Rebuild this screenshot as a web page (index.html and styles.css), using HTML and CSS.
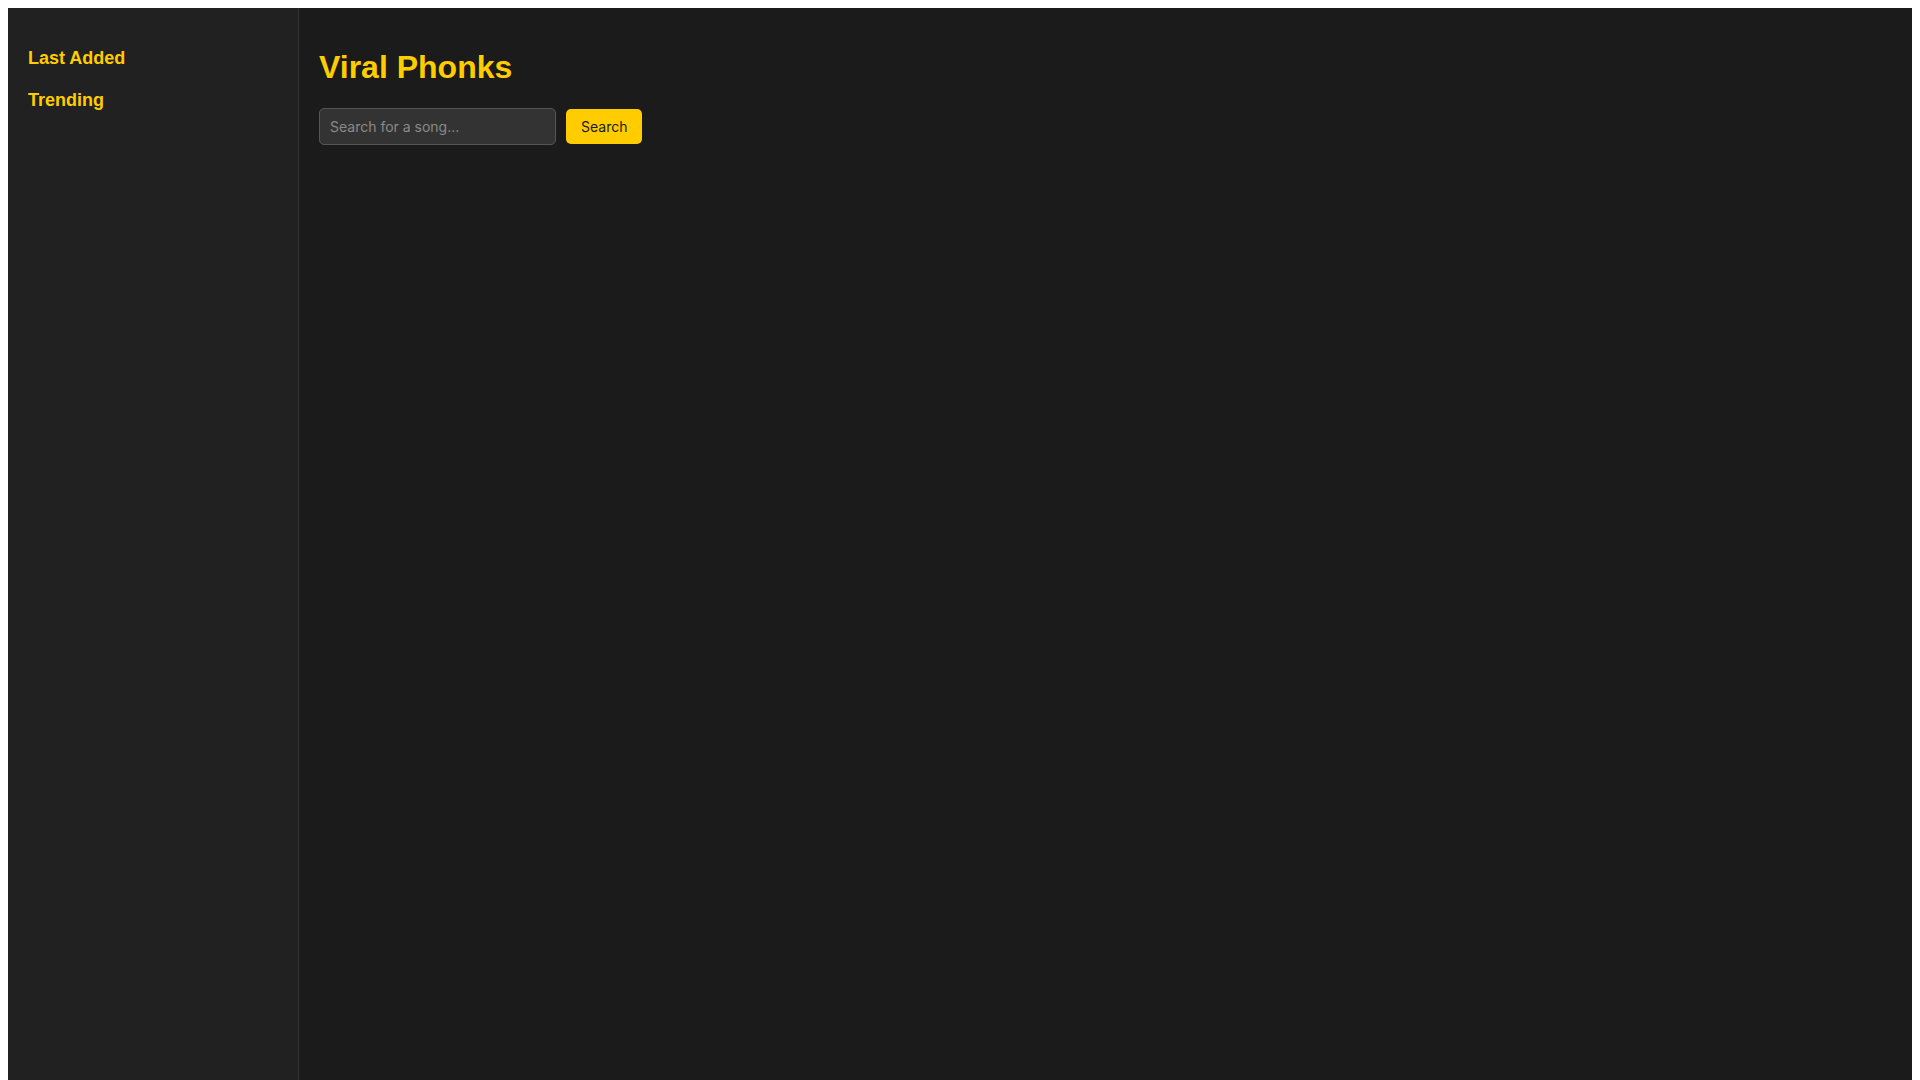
FILE: index.html
```html
<!DOCTYPE html>
<html lang="en">
<head>
<meta charset="utf-8">
<title>Viral Phonks</title>
<link rel="stylesheet" href="styles.css">
</head>
<body>
<div class="layout">
  <aside class="sidebar">
    <ul class="nav">
      <li><a href="#">Last Added</a></li>
      <li><a href="#">Trending</a></li>
    </ul>
  </aside>
  <main class="main">
    <h1 class="title">Viral Phonks</h1>
    <div class="search">
      <input class="search-input" type="text" placeholder="Search for a song...">
      <button class="search-btn">Search</button>
    </div>
  </main>
</div>
</body>
</html>
```

FILE: styles.css
```css
html {
  background: #ffffff;
  scrollbar-width: thin;
  scrollbar-color: #111111 #ffffff;
}
body {
  margin: 8px;
  font-family: "Liberation Sans", Arial, sans-serif;
  background: #ffffff;
}
.layout {
  display: flex;
  height: 100vh;
  background: #1b1b1b;
}
.sidebar {
  width: 250px;
  flex: 0 0 auto;
  padding: 20px;
  background: #212121;
  border-right: 1px solid #333333;
}
.nav {
  list-style: none;
  margin: 20px 0 0;
  padding: 0;
}
.nav li {
  margin-bottom: 21px;
}
.nav a {
  color: #ffcc00;
  font-size: 18px;
  font-weight: bold;
  text-decoration: none;
}
.main {
  flex: 1;
  padding: 20px;
  background: #1b1b1b;
}
.title {
  color: #ffcc00;
  font-size: 32px;
  font-weight: bold;
  margin: 21.44px 0;
}
.search {
  display: flex;
  align-items: center;
  gap: 10px;
}
.search-input {
  width: 237px;
  box-sizing: border-box;
  padding: 9px 10px;
  font-family: Inter, "Noto Sans", sans-serif;
  font-size: 14px;
  line-height: 17px;
  color: #dddddd;
  background: #333333;
  border: 1px solid #555555;
  border-radius: 5px;
  outline: none;
}
.search-input::placeholder {
  color: #8a8a8a;
}
.search-btn {
  padding: 9px 15px;
  font-family: Inter, "Noto Sans", sans-serif;
  font-size: 14px;
  line-height: 17px;
  font-weight: 400;
  color: #1a1a1a;
  background: #ffcc00;
  border: none;
  border-radius: 5px;
  cursor: pointer;
}
```
